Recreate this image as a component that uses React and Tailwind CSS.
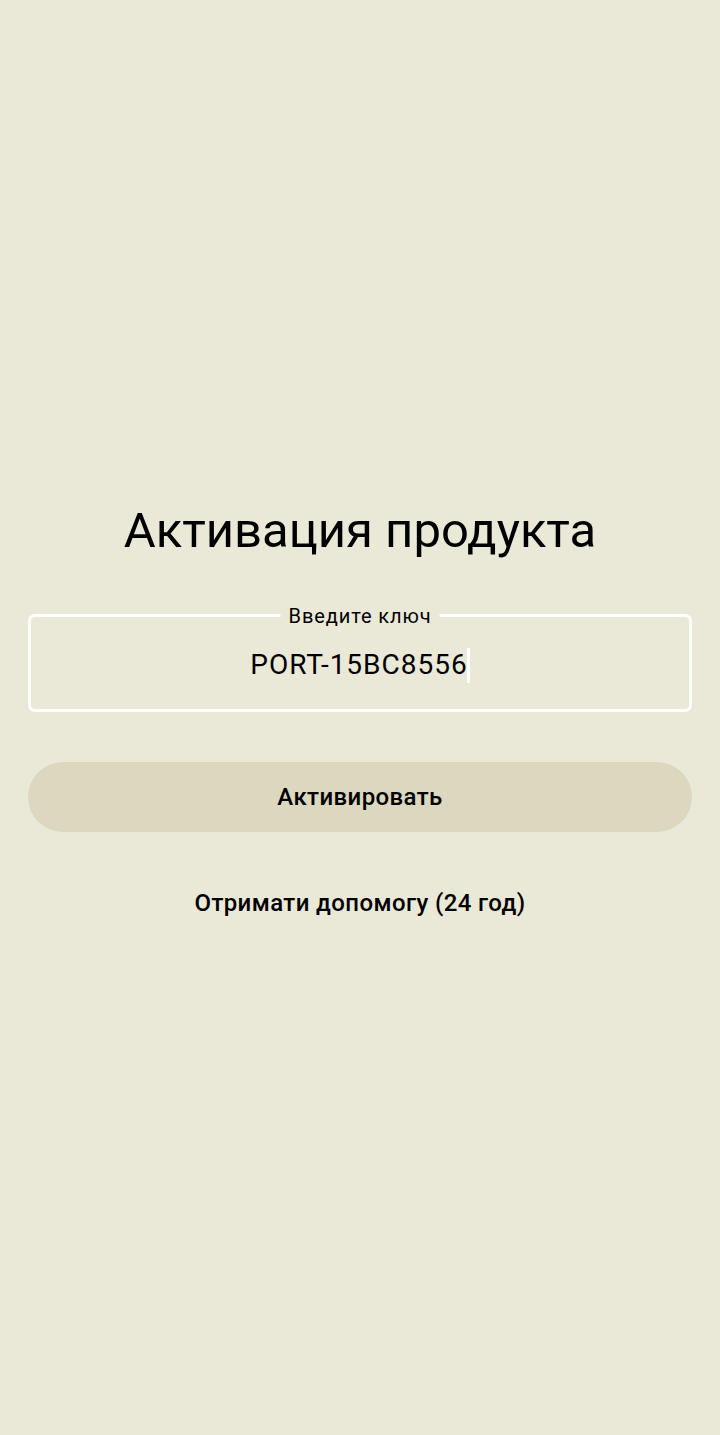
import React from 'react';

const App = () => {
  return (
    <div className="min-h-[1435px] w-full bg-[#eae9d8] flex flex-col items-center text-black" style={{ fontFamily: 'Roboto, "Noto Sans", sans-serif' }}>
      <div className="w-full px-7 pt-[502px] flex flex-col items-center">
        <h1 className="text-[49px] leading-[58px] font-normal text-black">Активация продукта</h1>

        {/* Key field */}
        <div className="relative w-full mt-[54px] h-[98px] border-[3px] border-white rounded-[7px] flex items-center justify-center">
          <span className="absolute -top-[12px] left-1/2 -translate-x-1/2 px-2 bg-[#eae9d8] text-[20px] leading-[22px] tracking-[0.9px]">Введите ключ</span>
          <div className="flex items-center mt-1">
            <span className="text-[28px] leading-[34px] tracking-[1px]">PORT-15BC8556</span>
            <span className="w-[3px] h-[35px] bg-white -ml-[1px]"></span>
          </div>
        </div>

        <button className="w-full mt-[50px] h-[70px] rounded-full bg-[#dcd8bf] text-[24px] font-medium tracking-[0.4px] flex items-center justify-center">
          Активировать
        </button>

        <button className="mt-[55px] text-[24px] font-medium tracking-[0.4px] leading-[32px]">Отримати допомогу (24 год)</button>
      </div>
    </div>
  );
};

export default App;
